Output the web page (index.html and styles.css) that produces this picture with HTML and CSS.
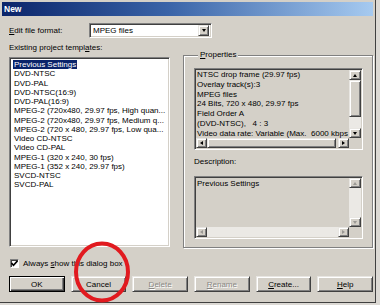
FILE: index.html
```html
<!DOCTYPE html>
<html lang="en">
<head>
  <meta charset="UTF-8">
  <title>New</title>
  <link rel="stylesheet" href="styles.css">
</head>
<body>
<div class="window">
  <div class="titlebar">New</div>

  <div class="content">
    <div class="format-row">
      <span class="format-label"><u>E</u>dit file format:</span>
      <div class="combo">
        <span class="combo-text">MPEG files</span>
        <span class="btn3d combo-btn"><i class="arrow down"></i></span>
      </div>
    </div>

    <div class="main">
      <div class="templates">
        <div class="caption">Existing project templ<u>a</u>tes:</div>
        <ul class="list">
          <li><span class="selected">Previous Settings</span></li>
          <li>DVD-NTSC</li>
          <li>DVD-PAL</li>
          <li>DVD-NTSC(16:9)</li>
          <li>DVD-PAL(16:9)</li>
          <li>MPEG-2 (720x480, 29.97 fps, High quan...</li>
          <li>MPEG-2 (720x480, 29.97 fps, Medium q...</li>
          <li>MPEG-2 (720 x 480, 29.97 fps, Low qua...</li>
          <li>Video CD-NTSC</li>
          <li>Video CD-PAL</li>
          <li>MPEG-1 (320 x 240, 30 fps)</li>
          <li>MPEG-1 (352 x 240, 29.97 fps)</li>
          <li>SVCD-NTSC</li>
          <li>SVCD-PAL</li>
        </ul>
      </div>

      <fieldset class="group">
        <legend><u>P</u>roperties</legend>

        <div class="field props">
          <div class="field-text">
            NTSC drop frame (29.97 fps)<br>
            Overlay track(s):3<br>
            MPEG files<br>
            24 Bits, 720 x 480, 29.97 fps<br>
            Field Order A<br>
            (DVD-NTSC),&nbsp;&nbsp;&nbsp;4 : 3<br>
            Video data rate: Variable (Max.&nbsp;&nbsp;6000 kbps
          </div>
          <div class="vscroll">
            <span class="btn3d sb-btn"><i class="arrow up"></i></span>
            <span class="btn3d sb-thumb"></span>
            <span class="sb-track"></span>
            <span class="btn3d sb-btn"><i class="arrow down"></i></span>
          </div>
          <div class="hscroll">
            <span class="btn3d sb-btn"><i class="arrow left"></i></span>
            <span class="btn3d sb-thumb"></span>
            <span class="btn3d sb-btn"><i class="arrow right"></i></span>
          </div>
          <div class="corner"></div>
        </div>

        <div class="desc-label">Description:</div>

        <div class="field desc">
          <div class="field-text">Previous Settings</div>
          <div class="vscroll disabled">
            <span class="btn3d sb-btn"><i class="arrow up"></i></span>
            <span class="sb-track"></span>
            <span class="btn3d sb-btn"><i class="arrow down"></i></span>
          </div>
          <div class="hscroll disabled">
            <span class="btn3d sb-btn"><i class="arrow left"></i></span>
            <span class="sb-track"></span>
            <span class="btn3d sb-btn"><i class="arrow right"></i></span>
          </div>
          <div class="corner"></div>
        </div>
      </fieldset>
    </div>

    <div class="check-row">
      <span class="checkbox">
        <svg width="7" height="7" viewBox="0 0 7 7"><path d="M0.5 3 L2.5 5.2 L6.5 0.8" fill="none" stroke="#000" stroke-width="1.6"/></svg>
      </span>
      <span>Always <u>s</u>how this dialog box</span>
    </div>

    <div class="buttons">
      <button class="btn3d push default">OK</button>
      <button class="btn3d push">Cancel</button>
      <button class="btn3d push disabled"><u>D</u>elete</button>
      <button class="btn3d push disabled"><u>R</u>ename</button>
      <button class="btn3d push"><u>C</u>reate...</button>
      <button class="btn3d push"><u>H</u>elp</button>
    </div>
  </div>

  <!-- hand-drawn red circle over the Cancel button -->
  <svg class="mark" width="64" height="66" viewBox="0 0 64 66">
    <ellipse cx="31" cy="33" rx="26" ry="28.5" fill="none" stroke="#e11a1f" stroke-width="4"/>
  </svg>
</div>
</body>
</html>
```

FILE: styles.css
```css
* {
  margin: 0;
  padding: 0;
  box-sizing: border-box;
}

html,
body {
  background: #dcd9d4;
}

body {
  width: 380px;
  height: 305px;
  overflow: hidden;
  font-family: 'Liberation Sans', Arial, sans-serif;
  font-size: 8px;
  color: #000;
}

.window {
  position: relative;
  width: 376px;
  height: 303px;
  padding: 2px;
  background: #d4d0c8;
  border-right: 1px solid #404040;
  border-bottom: 1px solid #404040;
}

.titlebar {
  height: 14px;
  line-height: 14px;
  padding-left: 2px;
  color: #fff;
  font-weight: bold;
  font-size: 8.5px;
  background: linear-gradient(to right, #0a246a 0%, #3a64a8 45%, #a6caf0 100%);
}

.content {
  padding-left: 7px;
}

/* 3D raised look used by buttons and scrollbar parts */
.btn3d {
  display: flex;
  align-items: center;
  justify-content: center;
  background: #d4d0c8;
  border: 1px solid;
  border-color: #e8e6e2 #404040 #404040 #e8e6e2;
  box-shadow: inset 1px 1px 0 #fff, inset -1px -1px 0 #808080;
}

.arrow {
  display: block;
  width: 0;
  height: 0;
  border-style: solid;
  border-color: transparent;
}

.arrow.up {
  border-width: 0 2.5px 3px 2.5px;
  border-bottom-color: #000;
}

.arrow.down {
  border-width: 3px 2.5px 0 2.5px;
  border-top-color: #000;
}

.arrow.left {
  border-width: 2.5px 3px 2.5px 0;
  border-right-color: #000;
}

.arrow.right {
  border-width: 2.5px 0 2.5px 3px;
  border-left-color: #000;
}

.format-row {
  display: flex;
  align-items: center;
  margin-top: 7px;
}

.format-label {
  width: 80px;
}

.combo {
  display: flex;
  align-items: center;
  width: 123px;
  height: 15px;
  padding: 2px;
  background: #fff;
  border: 1px solid;
  border-color: #808080 #fff #fff #808080;
  box-shadow: inset 1px 1px 0 #404040, inset -1px -1px 0 #d4d0c8;
}

.combo-text {
  flex: 1;
  padding-left: 1px;
}

.combo-btn {
  width: 11px;
  height: 11px;
}

.main {
  display: grid;
  grid-template-columns: 161px 190px;
  column-gap: 13px;
  margin-top: 5px;
  align-items: start;
}

.caption {
  line-height: 10px;
}

.list {
  list-style: none;
  height: 190px;
  margin-top: 4px;
  padding: 2px 2px;
  background: #fff;
  border: 1px solid;
  border-color: #808080 #fff #fff #808080;
  box-shadow: inset 1px 1px 0 #404040, inset -1px -1px 0 #d4d0c8;
  overflow: hidden;
}

.list li {
  line-height: 9.25px;
  padding-left: 2px;
  white-space: nowrap;
}

.list .selected {
  padding: 0 1px;
  margin-left: -1px;
  color: #fff;
  background: #0a246a;
}

.group {
  height: 198px;
  margin-top: 7px;
  padding: 8px 9px 0 10px;
  border: 1px solid #808080;
  box-shadow: inset 1px 1px 0 #fff, 1px 1px 0 #fff;
  min-width: 0;
}

.group legend {
  margin-left: 4px;
  padding: 0 2px;
  line-height: 10px;
  background: #d4d0c8;
}

.field {
  display: grid;
  grid-template-columns: 1fr 12px;
  grid-template-rows: 1fr 10px;
  width: 169px;
  border: 1px solid;
  border-color: #808080 #fff #fff #808080;
  box-shadow: inset 1px 1px 0 #404040, inset -1px -1px 0 #d4d0c8;
  padding: 1px;
  background: #d4d0c8;
}

.props {
  height: 82px;
}

.desc {
  height: 63px;
  margin-top: 9px;
}

.field-text {
  padding: 0 0 0 1px;
  line-height: 9.8px;
  white-space: nowrap;
  overflow: hidden;
}

.desc .field-text {
  padding-top: 1px;
}

.desc-label {
  margin-top: 7px;
  line-height: 10px;
}

.vscroll {
  display: flex;
  flex-direction: column;
}

.hscroll {
  display: flex;
}

.sb-btn {
  flex: none;
  width: 12px;
  height: 10px;
}

.hscroll .sb-btn {
  width: 11px;
  height: 10px;
}

.sb-track {
  flex: 1;
  background: #ebe9e5;
}

.vscroll .sb-thumb {
  height: 37px;
}

.hscroll .sb-thumb {
  flex: 1;
  margin-right: 2px;
}

.disabled .arrow.up { border-bottom-color: #9a9894; }
.disabled .arrow.down { border-top-color: #9a9894; }
.disabled .arrow.left { border-right-color: #9a9894; }
.disabled .arrow.right { border-left-color: #9a9894; }

.corner {
  background: #d4d0c8;
}

.check-row {
  display: flex;
  align-items: center;
  gap: 4px;
  margin-top: 10px;
  margin-left: 1px;
  height: 11px;
}

.checkbox {
  display: flex;
  align-items: center;
  justify-content: center;
  width: 9px;
  height: 9px;
  background: #fff;
  border: 1px solid;
  border-color: #808080 #fff #fff #808080;
  box-shadow: inset 1px 1px 0 #404040;
}

.buttons {
  display: flex;
  gap: 6px;
  margin-top: 7px;
}

.push {
  width: 56px;
  height: 16px;
  font-family: inherit;
  font-size: 8px;
  color: #000;
}

.push.default {
  border-color: #000;
  box-shadow: inset 1px 1px 0 #fff, inset -1px -1px 0 #404040, inset -2px -2px 0 #808080;
}

.push.disabled {
  color: #8a8884;
  text-shadow: 1px 1px 0 #fff;
}

.mark {
  position: absolute;
  left: 71px;
  top: 239px;
}
```
